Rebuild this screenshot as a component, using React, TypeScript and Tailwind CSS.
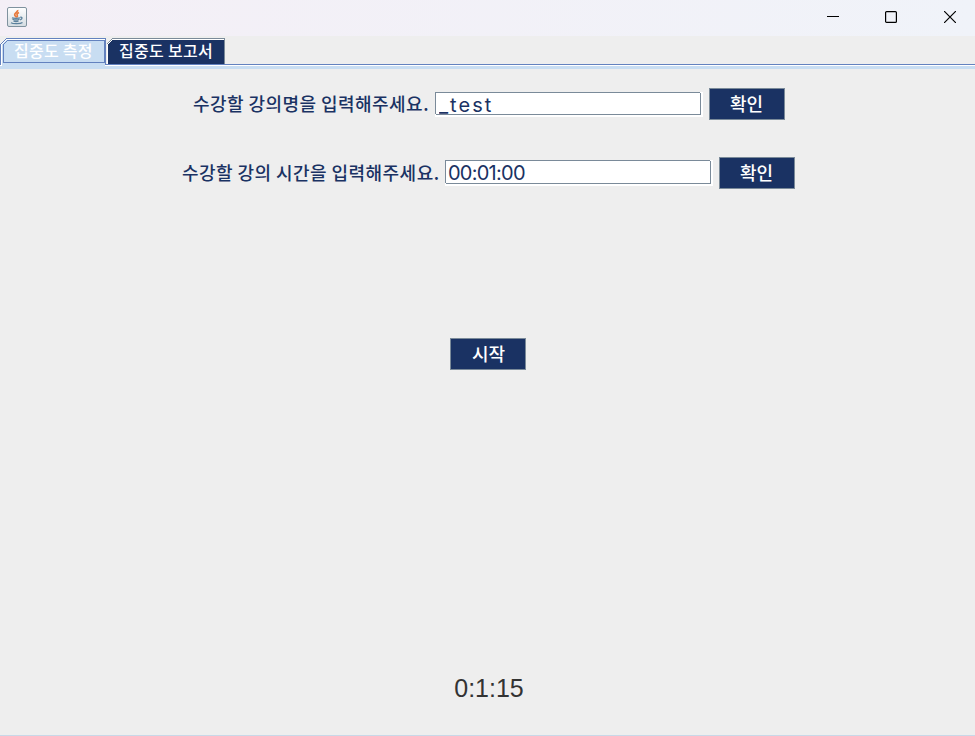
import React from "react";

const korean = "font-['Noto_Sans_CJK_KR',sans-serif]";

function JavaIcon() {
  return (
    <svg width="20" height="20" viewBox="0 0 20 20" fill="none">
      <defs>
        <linearGradient id="tile" x1="0" y1="0" x2="0" y2="1">
          <stop offset="0" stopColor="#ffffff" />
          <stop offset="1" stopColor="#d3dce1" />
        </linearGradient>
      </defs>
      <rect x="0.5" y="0.5" width="19" height="19" rx="1.5" fill="url(#tile)" stroke="#7f929e" />
      <path d="M10.700 3c.5 1.800-3 2.700-3 4.700 0 1.300 1.700 1.800 1.500 3M12 5.500c-1.600.8-2.400 1.600-1.800 2.700.5.900.3 1.400-.4 2" stroke="#e87a3c" strokeWidth="1.700" />
      <path d="M5 10.700c1 .8 7 .8 8 0M5.500 12.300c1.500.8 5.500.8 7 0M6.500 13.900c1.500.7 3.500.7 5 0M13.200 10.300c2.300-.5 2.600 1.700-.2 2.700M4 15.700c2 1.400 9.500 1.300 11.500-.3" stroke="#5b819d" strokeWidth="1.300" />
    </svg>
  );
}

function TitleBar() {
  return (
    <header className="flex h-9 shrink-0 items-start justify-between bg-linear-to-r from-[#f4eff6] to-[#f0f3f9]">
      <div className="pt-[7px] pl-[7px]"><JavaIcon /></div>
      <div className="flex pt-[11px] pr-[19px]">
        <svg className="mr-[46px]" width="12" height="12" shapeRendering="crispEdges"><path d="M0 5.500h12" stroke="#000" /></svg>
        <svg className="mr-[47px]" width="12" height="12" fill="none"><rect x="0.600" y="0.600" width="10.800" height="10.800" rx="1" stroke="#000" strokeWidth="1.200" /></svg>
        <svg width="12" height="12" fill="none"><path d="M0 0l12 12M12 0L0 12" stroke="#000" strokeWidth="1.200" /></svg>
      </div>
    </header>
  );
}

function Tabs() {
  return (
    <nav className={`relative flex h-[33px] shrink-0 text-[16px] leading-[24px] font-medium text-white ${korean}`}>
      <svg className="absolute inset-0" width="975" height="33" fill="none" shapeRendering="crispEdges">
        <path d="M0 30h975v3H0z" fill="#c8ddf2" />
        <path d="M0 28.500h975" stroke="#6382bf" />
        <path d="M0 29.500h975" stroke="#fff" />
        <path d="M2 33V8l5-5h98v30z" fill="#c8ddf2" />
        <path d="M0.500 29V8.500l6-6H105.500V29" stroke="#6382bf" />
        <path d="M1.500 30V8.500l5-5H104.500" stroke="#fff" />
        <path d="M3.500 26.500V8.500l4-4H104.500V26.500z" stroke="#6382bf" />
        <path d="M108 28V8l5-5h111v25z" fill="#1a3263" />
        <path d="M106.500 8.500l6-6H224.500V28" stroke="#7a8a99" />
        <path d="M107.500 28V8.500l5-5H224" stroke="#fff" />
      </svg>
      <button className="relative flex h-7 w-[106px] items-start pt-[2px] pl-[14px] tracking-[0.250px]">집중도 측정</button>
      <button className="relative flex h-7 w-[119px] items-start pt-[2px] pl-[13px] tracking-[0.300px]">집중도 보고서</button>
    </nav>
  );
}

function ActionButton({ children, className = "pr-px" }: { children: React.ReactNode; className?: string }) {
  return (
    <button className={`flex h-8 w-[76px] items-center justify-center border border-[#7a8a99] bg-[#1a3263] pb-[2px] text-[18px] leading-none font-medium text-white ${korean} ${className}`}>
      {children}
    </button>
  );
}

function Field({ value, className }: { value: string; className: string }) {
  return (
    <div className="relative mt-1 border-r-2 border-b-2 border-white">
      <input readOnly value={value} className={`block w-[266px] border border-[#7a8a99] bg-white font-['Inter',sans-serif] text-[#1a3263] outline-none ${className}`} />
      <span className="absolute top-0 right-0 size-px bg-white" />
      <span className="absolute bottom-0 left-0 size-px bg-white" />
    </div>
  );
}

export default function App() {
  return (
    <div className="flex h-[736px] w-[975px] flex-col overflow-hidden border-b border-[#c8d8e8] bg-[#eeeeee]">
      <TitleBar />
      <Tabs />
      <main className="flex flex-1 flex-col items-center">
        <div className="mt-[19px] ml-[3px] flex h-8 items-start">
          <label className={`w-[242px] whitespace-nowrap text-[18px] leading-[30px] font-medium tracking-[0.450px] text-[#1a3263] ${korean}`}>수강할 강의명을 입력해주세요.</label>
          <Field value="_test" className="h-[23px] px-[3px] pt-[2px] text-[20px] tracking-[2px]" />
          <div className="ml-[6px]"><ActionButton>확인</ActionButton></div>
        </div>
        <div className="mt-[37px] ml-[2px] flex h-8 items-start">
          <label className={`w-[263px] whitespace-nowrap text-[18px] leading-[30px] font-medium tracking-[0.450px] text-[#1a3263] ${korean}`}>수강할 강의 시간을 입력해주세요.</label>
          <div className="-mt-px"><Field value="00:01:00" className="h-6 px-[2px] pt-[2px] text-[20px] tracking-[-0.750px]" /></div>
          <div className="ml-[6px]"><ActionButton>확인</ActionButton></div>
        </div>
        <div className="mt-[149px] ml-px"><ActionButton className="pl-px">시작</ActionButton></div>
        <output className="mt-[303px] ml-[3px] font-['Liberation_Sans',Arial,sans-serif] text-[25px] leading-[30px] text-[#333333]">0:1:15</output>
      </main>
    </div>
  );
}
